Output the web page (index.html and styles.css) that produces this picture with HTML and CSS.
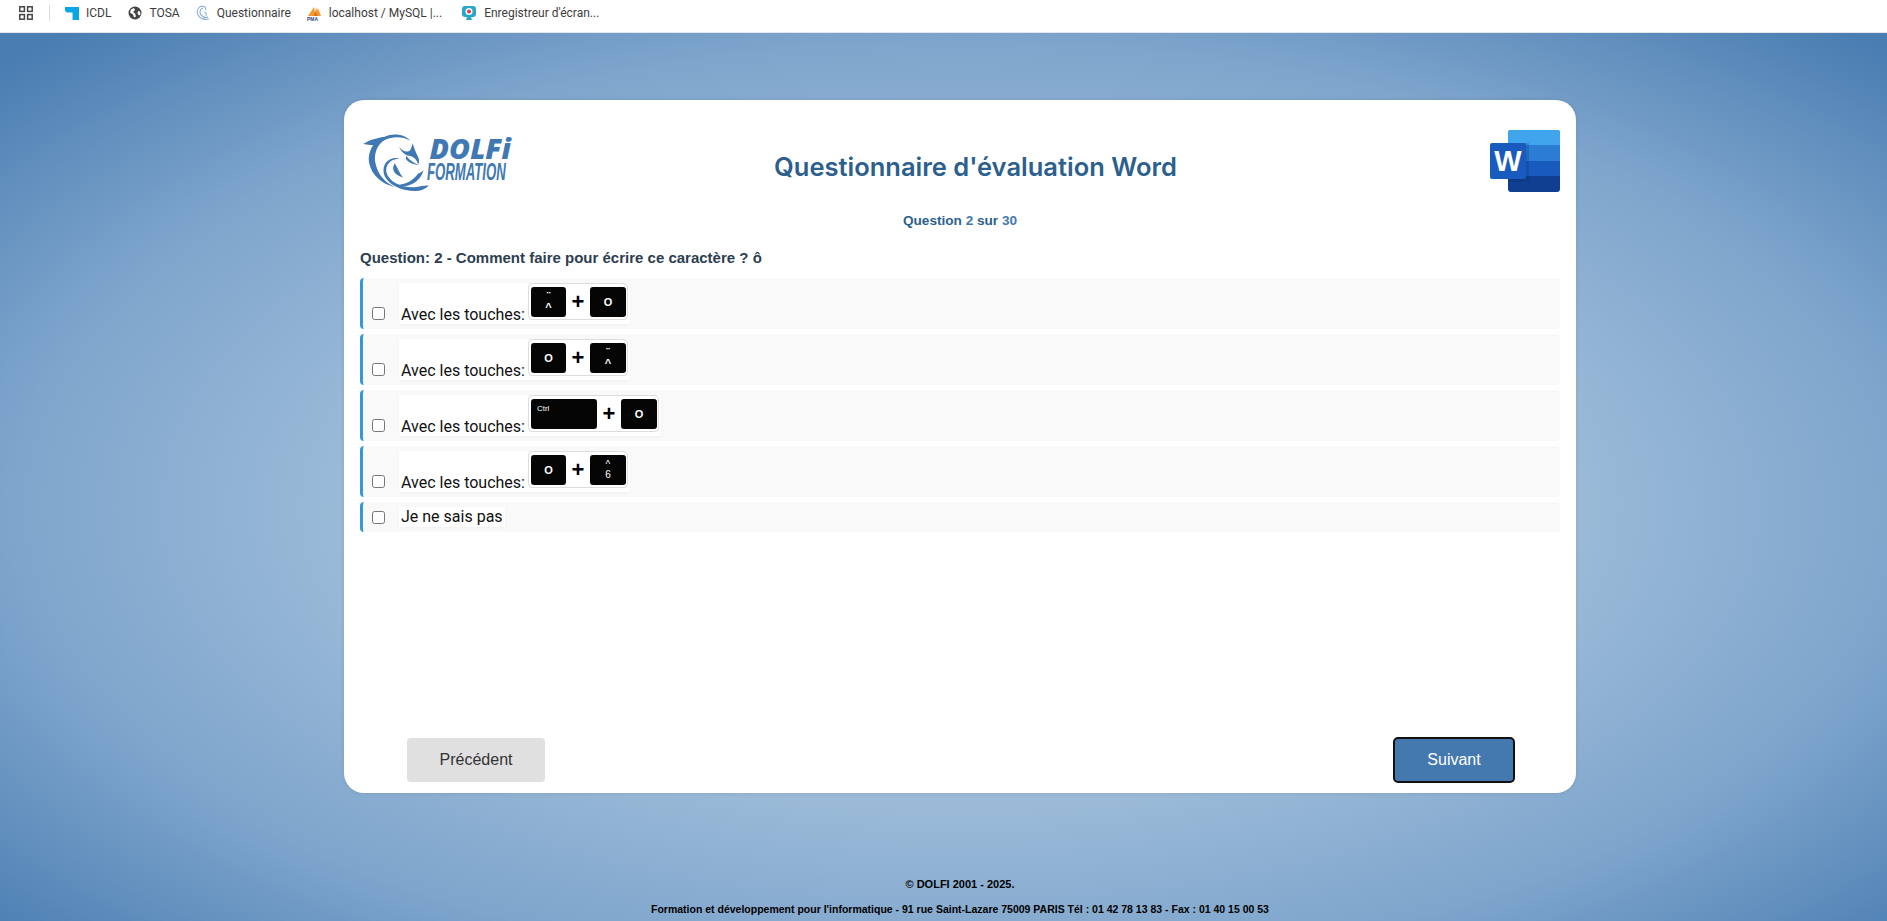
FILE: index.html
```html
<!DOCTYPE html>
<html lang="fr">
<head>
<meta charset="utf-8">
<title>Questionnaire d'évaluation Word</title>
<link rel="stylesheet" href="styles.css">
</head>
<body>
<nav class="bookmarks">
  <svg class="apps" viewBox="0 0 14 14" width="14" height="14"><g fill="none" stroke="#444" stroke-width="1.500"><rect x=".8" y=".8" width="4.600" height="4.600"/><rect x="8.600" y=".8" width="4.600" height="4.600"/><rect x=".8" y="8.600" width="4.600" height="4.600"/><rect x="8.600" y="8.600" width="4.600" height="4.600"/></g></svg>
  <span class="sep"></span>
  <a class="bm bm-icdl"><svg viewBox="0 0 13 13" width="14" height="14"><path fill="#0aa5e6" d="M0 1h13v12H7V6H2.500Q0 6 0 3z"/></svg>ICDL</a>
  <a class="bm bm-tosa"><svg viewBox="0 0 14 14" width="14" height="14"><circle cx="7" cy="7" r="6.500" fill="#444"/><path fill="#fff" d="M3 3.500l3-1.500 1 2-2 2 2 1.500 1 3-2 1-1-3-3-2zM10 5l2 .5.500 3-1.500 1-1.500-2z"/></svg>TOSA</a>
  <a class="bm bm-q"><svg viewBox="0 0 16 16" width="16" height="16"><g fill="none" stroke="#8cb0d3" stroke-width="1.100"><path d="M7 1C3 2 1 6 3 10s7 5 11 4"/><path d="M8 3C5 4 4 8 6 10s5 3 7 2"/><path d="M6 1l4 1 1 3"/><path d="M9 7c2 0 3 2 2 4"/></g></svg>Questionnaire</a>
  <a class="bm bm-pma"><svg viewBox="0 0 16 15" width="16" height="15"><path fill="#f29a2e" d="M1 10L7 1l1 6 1-6 1 4 1-3 3 8z"/><path fill="#e2711d" d="M7 10l1-5 3 5z"/><text x="0" y="15" class="pma-text">PMA</text></svg>localhost / MySQL |...</a>
  <a class="bm bm-cam"><svg viewBox="0 0 16 16" width="16" height="16"><rect x="1" y="1" width="14" height="11" rx="3" fill="#28a8c8"/><circle cx="8" cy="6.500" r="3.500" fill="#fff"/><circle cx="8" cy="6.500" r="2" fill="#e23b4c"/><path d="M6 12h4l1 3H5z" fill="#28a8c8"/></svg>Enregistreur d'écran...</a>
</nav>

<main class="page">
  <section class="card">
    <header class="card-head">
      <svg class="logo" viewBox="70 100 460 190" width="153" height="63">
        <g fill="#3f78b3">
          <path d="M70 142C90 128 120 122 135 120 160 108 195 112 212 132 190 120 160 118 135 130 110 145 100 175 108 205 115 235 135 258 165 272 125 262 95 235 88 200 84 180 90 160 100 146 90 145 80 144 70 142Z"/>
          <path d="M178 150C188 165 203 170 212 160 216 152 218 146 219 140 224 155 228 168 236 182 240 192 238 198 236 205 232 190 222 180 208 178 195 176 184 165 178 150Z"/>
          <path d="M200 178C210 192 222 200 236 205 222 205 205 198 198 186Z"/>
          <path d="M180 188C155 185 135 205 140 228 148 258 190 276 230 272 245 270 258 266 268 268 255 280 240 285 225 284 190 284 150 268 135 240 125 215 135 190 160 185 168 184 175 185 180 188Z"/>
          <path d="M165 200C155 215 160 235 190 243 178 228 175 215 165 200Z"/>
          <path d="M252 222C245 245 225 265 195 270 185 271 175 270 168 266 200 266 222 250 235 232 240 230 246 226 252 222Z"/>
        </g>
        <text x="270" y="187" class="logo-dolfi" textLength="245" lengthAdjust="spacingAndGlyphs">DOLFi</text>
        <text x="262" y="250" class="logo-formation" textLength="238" lengthAdjust="spacingAndGlyphs">FORMATION</text>
      </svg>
      <h1 class="title">Questionnaire d'évaluation Word</h1>
      <svg class="word" viewBox="0 0 70 62" width="70" height="62">
        <rect x="18" y="0" width="52" height="62" rx="3" fill="#103f91"/>
        <path d="M21 0h46a3 3 0 0 1 3 3v12H18V3a3 3 0 0 1 3-3z" fill="#41a5ee"/>
        <rect x="18" y="15" width="52" height="16" fill="#2b7cd3"/>
        <rect x="18" y="31" width="52" height="15" fill="#185abd"/>
        <rect x="18" y="13" width="21" height="39" fill="#0b2f6e" opacity=".22"/>
        <rect x="0" y="13" width="36" height="36" rx="2" fill="#185abd"/>
        <text x="18" y="41" class="word-w">W</text>
      </svg>
    </header>

    <p class="progress">Question <span class="progress-num">2</span> sur <span class="progress-num">30</span></p>
    <h2 class="question">Question: 2 - Comment faire pour écrire ce caractère ? ô</h2>

    <ul class="answers">
      <li class="answer">
        <input type="checkbox" class="check">
        <label class="answer-label"><span class="label-text">Avec les touches:</span>
          <span class="combo">
            <span class="key key-stack"><i>¨</i><i>^</i></span><b class="plus">+</b><span class="key">O</span>
          </span>
        </label>
      </li>
      <li class="answer">
        <input type="checkbox" class="check">
        <label class="answer-label"><span class="label-text">Avec les touches:</span>
          <span class="combo">
            <span class="key">O</span><b class="plus">+</b><span class="key key-stack"><i>¨</i><i>^</i></span>
          </span>
        </label>
      </li>
      <li class="answer">
        <input type="checkbox" class="check">
        <label class="answer-label"><span class="label-text">Avec les touches:</span>
          <span class="combo">
            <span class="key key-ctrl">Ctrl</span><b class="plus">+</b><span class="key">O</span>
          </span>
        </label>
      </li>
      <li class="answer">
        <input type="checkbox" class="check">
        <label class="answer-label"><span class="label-text">Avec les touches:</span>
          <span class="combo">
            <span class="key">O</span><b class="plus">+</b><span class="key key-six"><i>^</i><i>6</i></span>
          </span>
        </label>
      </li>
      <li class="answer answer-short">
        <input type="checkbox" class="check">
        <label class="answer-label">Je ne sais pas</label>
      </li>
    </ul>

    <div class="nav-buttons">
      <button class="btn btn-prev">Précédent</button>
      <button class="btn btn-next">Suivant</button>
    </div>
  </section>
</main>

<footer class="footer">
  <p class="footer-top">© DOLFI 2001 - 2025.</p>
  <p>Formation et développement pour l'informatique - 91 rue Saint-Lazare 75009 PARIS Tél : 01 42 78 13 83 - Fax : 01 40 15 00 53</p>
</footer>
</body>
</html>
```
FILE: styles.css
```css
* { box-sizing: border-box; }
html {
  height: 921px;
  overflow: hidden;
  background: radial-gradient(ellipse 1357px 665px at 960px 508px, #aecae3 0%, #9bbad8 45%, #7ea5cc 70%, #4a7db2 97%) #4a7db2;
}
body {
  margin: 0;
  width: 1920px;
  height: 921px;
  font-family: "Liberation Sans", Arial, sans-serif;
}
.bookmarks {
  height: 33px;
  background: #fff;
  border-bottom: 1px solid #e3e6ea;
  display: flex;
  align-items: center;
  padding: 0 0 6px 19px;
  font-family: Roboto, sans-serif;
  font-size: 12px;
  color: #3c3c3c;
}
.apps { flex: none; margin-right: 16px; }
.sep { width: 1px; height: 16px; background: #d5dfea; margin-right: 15px; }
.bm { display: flex; align-items: center; gap: 7px; white-space: nowrap; }
.bm-icdl { margin-right: 17px; }
.bm-tosa { margin-right: 15px; }
.bm-q { margin-right: 16px; gap: 6px; }
.bm-pma { margin-right: 19px; gap: 6px; }
.pma-text { font: bold 5px "Liberation Sans", sans-serif; fill: #2b4a80; }

.page { padding-top: 67px; }
.card {
  width: 1232px;
  height: 693px;
  margin: 0 auto;
  background: #fff;
  border-radius: 20px;
  box-shadow: 0 0 4px rgba(0,0,0,.1);
  padding: 30px 16px 10px;
  display: flex;
  flex-direction: column;
}
.card-head { display: flex; align-items: center; height: 62px; }
.logo { flex: none; margin-left: 3px; }
.logo-dolfi { font: italic 800 87px "Open Sans", sans-serif; fill: #3f78b3; }
.logo-formation { font: italic bold 70px "Liberation Sans", sans-serif; fill: #3f78b3; }
.title {
  flex: 1;
  margin: 0;
  padding: 10px 55px 0 0;
  text-align: center;
  font-family: Inter, sans-serif;
  font-size: 25.5px;
  font-weight: 600;
  color: #2c5f8d;
}
.word { flex: none; }
.word-w { font: bold 29px "Liberation Sans", sans-serif; fill: #fff; text-anchor: middle; }

.progress {
  margin: 21px 0 0;
  text-align: center;
  font-size: 13.6px;
  line-height: 16px;
  font-weight: bold;
  color: #2c5f8d;
}
.progress-num { color: #4479b0; }
.question {
  margin: 20px 0 0;
  font-size: 15px;
  line-height: 18px;
  font-weight: bold;
  color: #2c3e50;
}
.answers { list-style: none; margin: 11px 0 0; padding: 0; display: flex; flex-direction: column; gap: 5px; }
.answer {
  height: 51px;
  background: #f9f9f9;
  border-left: 3px solid #3498db;
  border-radius: 4px;
  display: flex;
  align-items: flex-end;
  padding: 0 0 5px 9px;
}
.answer-short { height: 30px; padding-bottom: 0; align-items: center; }
.check { width: 13px; height: 13px; margin: 0 14px 4px 0; flex: none; }
.answer-short .check { margin-bottom: 0; }
.answer-label {
  background: #fff;
  box-shadow: 0 1px 3px rgba(0,0,0,.04);
  font-family: Roboto, sans-serif;
  font-size: 16px;
  line-height: 18px;
  color: #111;
  padding: 0 2px;
  display: flex;
  align-items: flex-end;
  gap: 3px;
}
.answer-short .answer-label { display: block; line-height: 20px; }
.combo {
  display: inline-flex;
  align-items: center;
  height: 37px;
  margin-bottom: 4px;
  padding: 0 1px 0 2px;
  background: #fff;
  border: 1px solid #ddd;
  border-radius: 4px;
}
.key {
  width: 36px;
  height: 30px;
  background: #050505;
  border-radius: 3px;
  color: #fff;
  font: bold 11px/30px "Liberation Sans", sans-serif;
  text-align: center;
}
.key:first-child { width: 35px; }
.key-stack, .key-six { display: flex; flex-direction: column; align-items: center; justify-content: center; }
.key i { font-style: normal; line-height: 10px; height: 10px; }
.key-stack i:first-child { font-family: "DejaVu Sans", sans-serif; }
.key-six { font-size: 10px; }
.key-six i { font-weight: normal; }
.key.key-ctrl {
  width: 66px;
  font: normal 8px/10px "Liberation Sans", sans-serif;
  text-align: left;
  padding: 5px 0 0 6px;
}
.plus { width: 24px; text-align: center; font: bold 22px/30px "Liberation Sans", sans-serif; color: #000; }

.nav-buttons { margin-top: auto; display: flex; justify-content: space-between; align-items: center; padding: 0 45px 0 47px; }
.btn {
  font-family: "Liberation Sans", sans-serif;
  font-size: 16px;
  border-radius: 4px;
  cursor: pointer;
}
.btn-prev { width: 138px; height: 44px; background: #e0e0e0; color: #333; border: 0; }
.btn-next { width: 122px; height: 46px; background: #4479b0; color: #fff; border: 2px solid #111; border-radius: 5px; }

.footer { text-align: center; font-size: 10.5px; font-weight: bold; color: #000; padding-top: 85px; }
.footer p { margin: 0 0 13px; line-height: 12px; }
.footer-top { font-size: 11px; }
```
